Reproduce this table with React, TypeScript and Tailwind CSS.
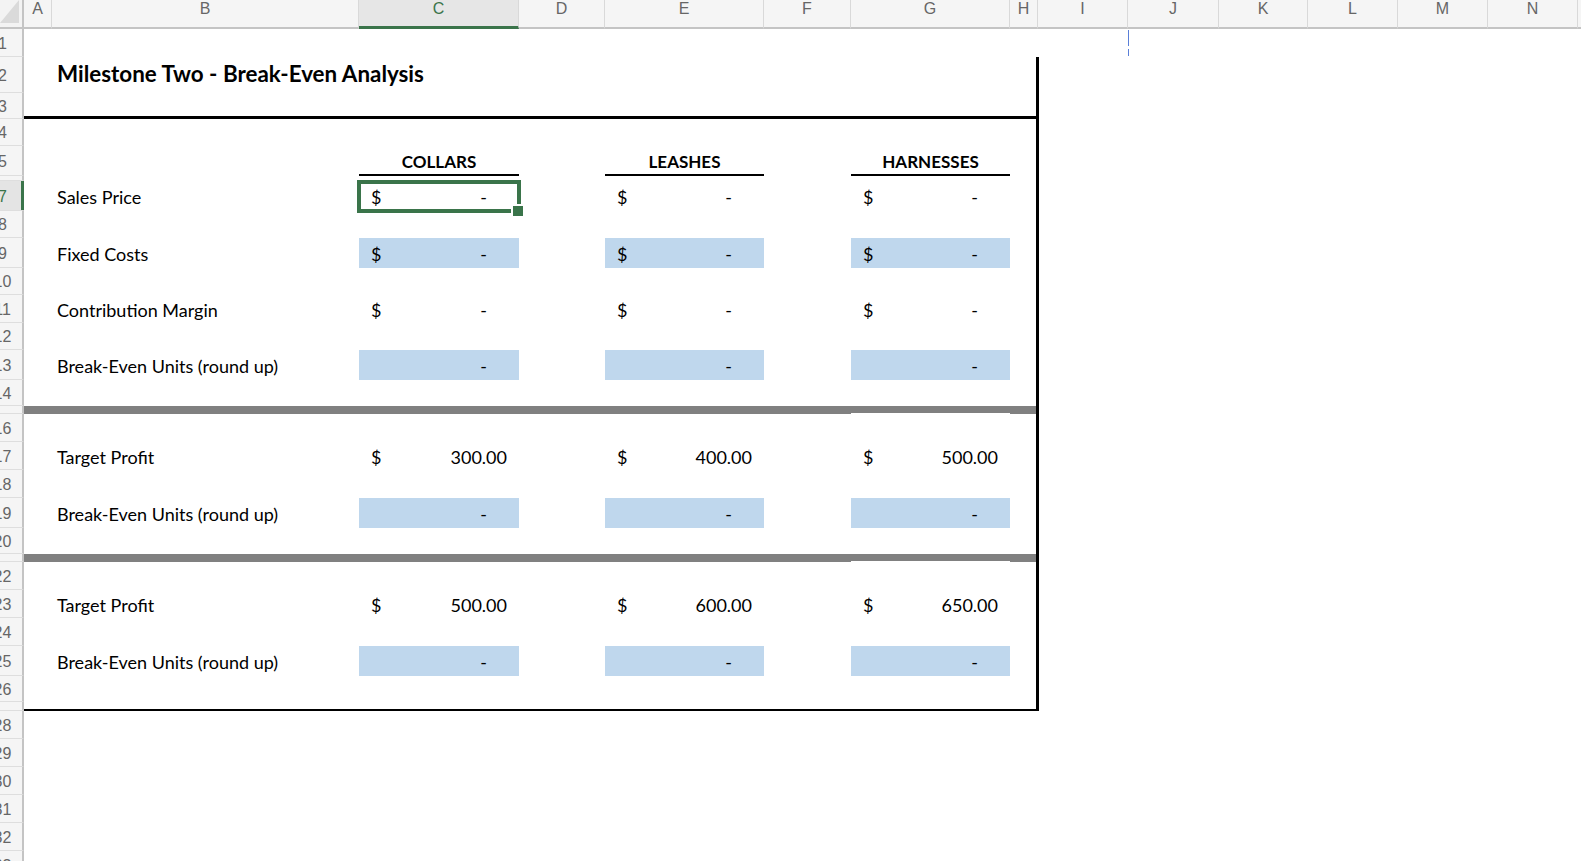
import React from "react";

type ColDef = { l: string; cls: string; sel?: boolean };
const COLS: ColDef[] = [
  { l: "A", cls: "w-[28px]" },
  { l: "B", cls: "w-[307px]" },
  { l: "C", cls: "w-[160px]", sel: true },
  { l: "D", cls: "w-[86px]" },
  { l: "E", cls: "w-[159px]" },
  { l: "F", cls: "w-[87px]" },
  { l: "G", cls: "w-[159px]" },
  { l: "H", cls: "w-[28px]" },
  { l: "I", cls: "w-[90px]" },
  { l: "J", cls: "w-[91px]" },
  { l: "K", cls: "w-[89px]" },
  { l: "L", cls: "w-[90px]" },
  { l: "M", cls: "w-[90px]" },
  { l: "N", cls: "w-[90px]" },
  { l: "O", cls: "w-[90px]" },
];

type RH = { n: string; cls: string; sel?: boolean };
const ROWHDR: RH[] = [
  { n: "1", cls: "h-[28px]" },
  { n: "2", cls: "h-[36px]" },
  { n: "3", cls: "h-[26px]" },
  { n: "4", cls: "h-[27px]" },
  { n: "5", cls: "h-[30px]" },
  { n: "", cls: "h-[5px]" },
  { n: "7", cls: "h-[30px]", sel: true },
  { n: "8", cls: "h-[27px]" },
  { n: "9", cls: "h-[30px]" },
  { n: "10", cls: "h-[27px]" },
  { n: "11", cls: "h-[28px]" },
  { n: "12", cls: "h-[27px]" },
  { n: "13", cls: "h-[30px]" },
  { n: "14", cls: "h-[26px]" },
  { n: "", cls: "h-[8px]" },
  { n: "16", cls: "h-[28px]" },
  { n: "17", cls: "h-[28px]" },
  { n: "18", cls: "h-[28px]" },
  { n: "19", cls: "h-[30px]" },
  { n: "20", cls: "h-[26px]" },
  { n: "", cls: "h-[8px]" },
  { n: "22", cls: "h-[28px]" },
  { n: "23", cls: "h-[28px]" },
  { n: "24", cls: "h-[28px]" },
  { n: "25", cls: "h-[30px]" },
  { n: "26", cls: "h-[26px]" },
  { n: "", cls: "h-[9px]" },
  { n: "28", cls: "h-[28px]" },
  { n: "29", cls: "h-[28px]" },
  { n: "30", cls: "h-[28px]" },
  { n: "31", cls: "h-[28px]" },
  { n: "32", cls: "h-[28px]" },
  { n: "33", cls: "h-[28px]" },
];

function Acct({ dollar, value, blue }: { dollar?: boolean; value?: string; blue?: boolean }) {
  return (
    <div
      className={`h-full flex items-center justify-between pt-[1px] text-[18px] leading-none text-black ${
        blue ? "bg-[#bfd7ed]" : ""
      }`}
    >
      <span className="pl-[12px]">{dollar ? "$" : ""}</span>
      <span className={value ? "pr-[12px]" : "pr-[32px]"}>{value ?? "-"}</span>
    </div>
  );
}

function DataRow({
  h,
  label,
  c,
  e,
  g,
}: {
  h: string;
  label?: string;
  c?: React.ReactNode;
  e?: React.ReactNode;
  g?: React.ReactNode;
}) {
  return (
    <div className={`flex shrink-0 ${h}`}>
      <div className="w-[28px] shrink-0" />
      <div className="w-[307px] shrink-0 flex items-center pl-[5px] pt-[1px] text-[18px] leading-none whitespace-nowrap text-black">
        {label}
      </div>
      <div className="w-[160px] shrink-0 relative">{c}</div>
      <div className="w-[86px] shrink-0" />
      <div className="w-[159px] shrink-0">{e}</div>
      <div className="w-[87px] shrink-0" />
      <div className="w-[159px] shrink-0">{g}</div>
      <div className="w-[26px] shrink-0" />
    </div>
  );
}

function GrayBar() {
  return (
    <div className="flex shrink-0 h-[8px]">
      <div className="w-[827px] shrink-0 bg-[#808080]" />
      <div className="w-[159px] shrink-0 bg-[#808080] border-b border-white" />
      <div className="w-[26px] shrink-0 bg-[#808080]" />
    </div>
  );
}

function ColTitle({ t }: { t: string }) {
  return (
    <div className="h-full flex items-center justify-center pt-[2px] font-bold text-[17px] leading-none text-black border-b-2 border-black">
      {t}
    </div>
  );
}

function Selection() {
  return (
    <>
      <div className="absolute left-[-2px] top-[-1px] w-[164px] h-[33px] border-4 border-[#3a744a] pointer-events-none" />
      <div className="absolute left-[152px] top-[23px] w-[14px] h-[14px] bg-[#3a744a] border-2 border-white" />
    </>
  );
}

export default function App() {
  return (
    <div className="relative w-[1581px] h-[861px] overflow-hidden bg-white font-['Lato',sans-serif]">
      {/* Column header */}
      <div className="flex h-[29px] font-['Liberation_Sans',Arial,sans-serif]">
        <div className="w-[24px] shrink-0 relative bg-[#f3f3f3] border-r-2 border-b-2 border-[#c4c4c4]">
          <svg className="absolute left-0 top-0" width="22" height="27" viewBox="0 0 22 27">
            <polygon points="19,0 19,23 0,23" fill="#dadada" />
          </svg>
        </div>
        {COLS.map((c) => (
          <div
            key={c.l}
            className={`${c.cls} shrink-0 flex justify-center text-[16px] leading-[17px] border-r border-r-[#d9d9d9] ${
              c.sel
                ? "bg-[#e6e6e6] text-[#3a744a] border-b-[3px] border-b-[#3a744a]"
                : "bg-[#f5f5f5] text-[#666666] border-b-2 border-b-[#c4c4c4]"
            }`}
          >
            <span className="pt-0">{c.l}</span>
          </div>
        ))}
      </div>

      <div className="flex">
        {/* Row header */}
        <div className="w-[24px] shrink-0 flex flex-col font-['Liberation_Sans',Arial,sans-serif]">
          {ROWHDR.map((r, i) => (
            <div
              key={i}
              className={`${r.cls} shrink-0 relative border-r-2 border-r-[#c4c4c4] border-b border-b-[#dedede] ${
                r.sel ? "bg-[#e4e4e4]" : "bg-[#f5f5f5]"
              }`}
            >
              <div className="absolute inset-0 overflow-hidden">
                <div
                  className={`w-[43px] -ml-[19px] h-full flex items-center justify-center pt-[2px] text-[16px] leading-none ${
                    r.sel ? "text-[#3a744a]" : "text-[#666666]"
                  }`}
                >
                  {r.n}
                </div>
              </div>
              {r.sel && <div className="absolute top-0 bottom-0 right-[-2px] w-[3px] bg-[#3a744a]" />}
            </div>
          ))}
        </div>

        {/* Sheet body */}
        <div className="flex-1 flex flex-col">
          {/* Row 1 */}
          <div className="h-[28px] shrink-0" />
          {/* Bordered block rows 2-27 */}
          <div className="w-[1015px] flex flex-col border-r-[3px] border-b-2 border-black">
            {/* Row 2 title */}
            <div className="flex shrink-0 h-[36px]">
              <div className="w-[28px] shrink-0" />
              <div className="flex items-center pl-[5px] pb-[2px] font-bold text-[22.4px] leading-none whitespace-nowrap text-black">
                Milestone Two - Break-Even Analysis
              </div>
            </div>
            {/* Row 3 with thick bottom border */}
            <div className="h-[26px] shrink-0 border-b-[3px] border-black" />
            {/* Row 4 */}
            <div className="h-[27px] shrink-0" />
            {/* Row 5 column titles */}
            <DataRow h="h-[30px]" c={<ColTitle t="COLLARS" />} e={<ColTitle t="LEASHES" />} g={<ColTitle t="HARNESSES" />} />
            {/* Row 6 */}
            <div className="h-[5px] shrink-0" />
            {/* Row 7 */}
            <DataRow
              h="h-[30px]"
              label="Sales Price"
              c={
                <>
                  <Acct dollar />
                  <Selection />
                </>
              }
              e={<Acct dollar />}
              g={<Acct dollar />}
            />
            <DataRow h="h-[27px]" />
            <DataRow h="h-[30px]" label="Fixed Costs" c={<Acct dollar blue />} e={<Acct dollar blue />} g={<Acct dollar blue />} />
            <DataRow h="h-[27px]" />
            <DataRow h="h-[28px]" label="Contribution Margin" c={<Acct dollar />} e={<Acct dollar />} g={<Acct dollar />} />
            <DataRow h="h-[27px]" />
            <DataRow h="h-[30px]" label="Break-Even Units (round up)" c={<Acct blue />} e={<Acct blue />} g={<Acct blue />} />
            <DataRow h="h-[26px]" />
            <GrayBar />
            <DataRow h="h-[28px]" />
            <DataRow
              h="h-[28px]"
              label="Target Profit"
              c={<Acct dollar value="300.00" />}
              e={<Acct dollar value="400.00" />}
              g={<Acct dollar value="500.00" />}
            />
            <DataRow h="h-[28px]" />
            <DataRow h="h-[30px]" label="Break-Even Units (round up)" c={<Acct blue />} e={<Acct blue />} g={<Acct blue />} />
            <DataRow h="h-[26px]" />
            <GrayBar />
            <DataRow h="h-[28px]" />
            <DataRow
              h="h-[28px]"
              label="Target Profit"
              c={<Acct dollar value="500.00" />}
              e={<Acct dollar value="600.00" />}
              g={<Acct dollar value="650.00" />}
            />
            <DataRow h="h-[28px]" />
            <DataRow h="h-[30px]" label="Break-Even Units (round up)" c={<Acct blue />} e={<Acct blue />} g={<Acct blue />} />
            <DataRow h="h-[26px]" />
            <div className="h-[7px] shrink-0" />
          </div>
        </div>
      </div>

      {/* column-resize cursor marker */}
      <div className="absolute left-[1128px] top-[30px] w-px h-[16px] bg-[#5a7fd8]" />
      <div className="absolute left-[1128px] top-[49px] w-px h-[7px] bg-[#5a7fd8]" />
    </div>
  );
}
